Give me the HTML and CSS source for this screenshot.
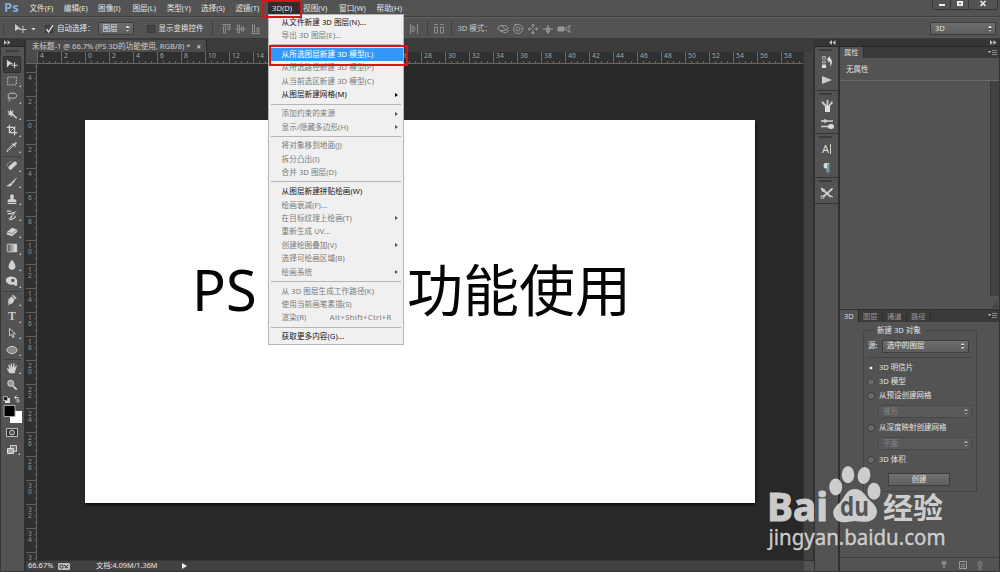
FILE: index.html
```
<!DOCTYPE html>
<html lang="zh-CN">
<head>
<meta charset="utf-8">
<title>Photoshop</title>
<link rel="stylesheet" href="styles.css">
</head>
<body>
<div class="app">
  <header class="menubar">
    <span class="logo">Ps</span>
    <nav class="menus">
      <span class="m">文件(F)</span><span class="m">编辑(E)</span><span class="m">图像(I)</span><span class="m">图层(L)</span><span class="m">类型(Y)</span><span class="m">选择(S)</span><span class="m">滤镜(T)</span>
      <div class="m open">3D(D)
        <div class="dropdown">
          <div class="item on">从文件新建 3D 图层(N)...</div>
          <div class="item">导出 3D 图层(E)...</div>
          <div class="sep"></div>
          <div class="item hot">从所选图层新建 3D 模型(L)</div>
          <div class="item">从所选路径新建 3D 模型(P)</div>
          <div class="item">从当前选区新建 3D 模型(C)</div>
          <div class="item on sub">从图层新建网格(M)</div>
          <div class="sep"></div>
          <div class="item sub">添加约束的来源</div>
          <div class="item sub">显示/隐藏多边形(H)</div>
          <div class="sep"></div>
          <div class="item">将对象移到地面(J)</div>
          <div class="item">拆分凸出(I)</div>
          <div class="item">合并 3D 图层(D)</div>
          <div class="sep"></div>
          <div class="item on">从图层新建拼贴绘画(W)</div>
          <div class="item">绘画衰减(F)...</div>
          <div class="item sub">在目标纹理上绘画(T)</div>
          <div class="item">重新生成 UV...</div>
          <div class="item sub">创建绘图叠加(V)</div>
          <div class="item">选择可绘画区域(B)</div>
          <div class="item sub">绘画系统</div>
          <div class="sep"></div>
          <div class="item">从 3D 图层生成工作路径(K)</div>
          <div class="item">使用当前画笔素描(S)</div>
          <div class="item">渲染(R)<span class="key">Alt+Shift+Ctrl+R</span></div>
          <div class="sep"></div>
          <div class="item on">获取更多内容(G)...</div>
        </div>
        <i class="mark mark-title"></i>
        <i class="mark mark-item"></i>
      </div>
      <span class="m">视图(V)</span><span class="m">窗口(W)</span><span class="m">帮助(H)</span>
    </nav>
    <div class="winbtns">
      <span><svg width="8" height="8"><path d="M1 4h6v2H1z" fill="#eee"/></svg></span>
      <span><svg width="8" height="8"><path d="M1 1h6v5H1z" fill="#eee"/><path d="M3 3h2v1H3z" fill="#333"/></svg></span>
      <span><svg width="8" height="8"><path d="M1.500 1l5 5m0-5l-5 5" stroke="#eee" stroke-width="1.600"/></svg></span>
    </div>
  </header>

  <div class="options">
    <i class="grip"></i>
    <svg class="o-move" width="22" height="12"><path d="M1 1l6 5-3 .2L1 8z" fill="#ccc"/><path d="M9 3v7M5.500 6.500h7" stroke="#ccc"/><path d="M17.500 5h4l-2 2.500z" fill="#ddd"/></svg>
    <span class="check"><svg width="9" height="9"><path d="M1.500 4l2 3L8 0" fill="none" stroke="#e8e8e8" stroke-width="1.300"/></svg></span>
    <span class="o-text">自动选择：</span>
    <span class="select o-layer">图层<i class="spin"></i></span>
    <span class="check off"></span>
    <span class="o-text">显示变换控件</span>
    <i class="vline"></i>
    <svg class="align" width="42" height="12" fill="none" stroke="#8c8c8c"><path d="M1 1.500h9M2.500 3v7h2V3zM7 3v4h2V3zM14.500 6h10M16.500 2v8h2V2zM20.500 4v4h2V4zM30 10.500h9M31.500 2v7h2V2zM36 5v4h2V5z"/></svg>
    <div class="o-right">
      <svg width="10" height="12" fill="none" stroke="#8c8c8c"><path d="M1.500 1v10M8.500 1v10M3 3.500h2v5H3zM6 5v2"/></svg>
      <i class="vline v1"></i>
      <svg width="12" height="12" fill="none" stroke="#8c8c8c"><path d="M1 1.500h4M7 1.500h4M1.500 4h3v6h-3zM7.500 4h3v6h-3z"/></svg>
      <i class="vline v2"></i>
      <span class="o-text dim">3D 模式：</span>
      <svg class="modes" width="76" height="12" fill="none" stroke="#989898"><ellipse cx="6" cy="5" rx="5" ry="2.500"/><path d="M3 8l6 2 3-3M5 3l4 4"/><circle cx="21" cy="6" r="4.500"/><circle cx="21" cy="6" r="2"/><path d="M17 2l3-1"/><path d="M36 1v10M31 6h10" stroke-dasharray="4 2"/><path d="M34.500 3l1.500-2 1.500 2M34.500 9l1.500 2 1.500-2M33 4.500L31 6l2 1.500M39 4.500L41 6l-2 1.500M51 2v9M46 6h10M49 8h4l-2 2z"/><circle cx="51" cy="6" r="1.500"/><path d="M61 4h6v4h-6z" fill="#989898"/><path d="M68 6l4-3v6zM73 2v2M73 8v2"/></svg>
    </div>
    <span class="select o-space">3D<i class="spin"></i></span>
  </div>

  <main class="work">
    <aside class="tools">
      <div class="dockhead left"><svg width="7" height="5"><path d="M0 0l3 2.500L0 5zM3.500 0l3 2.500-3 2.500z" fill="#bbb"/></svg></div>
      <div class="toolbody">
        <i class="handle"></i>
        <div class="tg">
          <span class="tool active"><svg viewBox="0 0 14 14"><path d="M1 2l7.500 5-4 .5L1 11z"/><path class="s" stroke-width="1.300" d="M10 5v7M6.500 8.500h7"/></svg></span>
          <span class="tool"><svg viewBox="0 0 14 14"><path class="s" stroke-dasharray="2 1.200" d="M2 2.500h10v9H2z"/></svg></span>
          <span class="tool"><svg viewBox="0 0 14 14"><ellipse class="s" cx="7.500" cy="5.500" rx="5" ry="3"/><path class="s" d="M4 7.500c-2 0-2 2-.5 2s1 2-.5 3"/></svg></span>
          <span class="tool"><svg viewBox="0 0 14 14"><path d="M5 1l1 3 3-1-1.500 3L10 8 7 8l-1 3-1-3-3 .5L3.500 6 1.500 3.500l3 .5z"/><path class="s" stroke-width="1.800" d="M7 7l5.500 5"/></svg></span>
          <span class="tool"><svg viewBox="0 0 14 14"><path class="s" stroke-width="1.500" d="M4 1v9h9M1 4h9v9"/><path class="s" d="M5 9l6-6"/></svg></span>
          <span class="tool"><svg viewBox="0 0 14 14"><path d="M8 2.500l1 1L11 1.500q2-.5 1.500 1.500l-2 2 1 1-1 1-4-3.500z"/><path class="s" d="M8.500 5.500L3 11l-2 1.500L2 10l5.500-5.500"/></svg></span>
        </div>
        <div class="tg">
          <span class="tool"><svg viewBox="0 0 14 14"><path class="s" stroke-width="4.500" stroke-linecap="round" d="M5 9l5.500-5"/><path class="s" stroke-dasharray="1 1" d="M6 2Q1 2 1.500 8"/></svg></span>
          <span class="tool"><svg viewBox="0 0 14 14"><path d="M13.500 1L8 9 6 7.500zM5.500 8L7.500 9.500Q5 13.500 0 11.500 3 11 5.500 8z"/></svg></span>
          <span class="tool"><svg viewBox="0 0 14 14"><path d="M5.500 7q-2-5 1.500-5.500Q10.500 2 8.500 7L12 8v2.500H2V8zM2 11.500h10v1.300H2z"/></svg></span>
          <span class="tool"><svg viewBox="0 0 14 14"><path d="M13 1L8 8 6.500 7zM6.500 7.500L8 9q-2 3-6 2 3-.5 4.500-3.500z"/><path class="s" stroke-width="1.400" d="M1 2.500h5M2 5.500h4q3-3 4-.5M11 8q0 4-7 4.500"/></svg></span>
          <span class="tool"><svg viewBox="0 0 14 14"><path d="M7 2l6 2v3l-6 5-6-2V7z"/><path d="M1 7l6 2 6-5" stroke="#777" fill="none"/></svg></span>
          <span class="tool"><svg viewBox="0 0 14 14"><defs><linearGradient id="g"><stop stop-color="#555"/><stop offset="1" stop-color="#eee"/></linearGradient></defs><path d="M1.500 2.500h11v9h-11z" fill="url(#g)" stroke="#ccc"/></svg></span>
          <span class="tool"><svg viewBox="0 0 14 14"><path d="M7 1q4 5 4 7.500a4 4 0 01-8 0Q3 6 7 1z"/></svg></span>
          <span class="tool"><svg viewBox="0 0 14 14"><path fill-rule="evenodd" d="M0 5q2-4 8-3 5 1 5 5v5q-2 2-3.500-1-6 1-8.500-2-2-2-1-4zm6 1.500a2 2 0 104 0 2 2 0 10-4 0z"/></svg></span>
        </div>
        <div class="tg">
          <span class="tool"><svg viewBox="0 0 14 14"><path d="M8.500 1l4 4-1.500 1-4-4zM6.500 3l3.500 3.500-2 4L2 13l3.500-5L2 12 3 6z"/></svg></span>
          <span class="tool letter">T</span>
          <span class="tool"><svg viewBox="0 0 14 14"><path class="s" d="M4 1.500v9l2.500-2 1.500 4 1.500-.8-1.500-3.700h3z"/></svg></span>
          <span class="tool"><svg viewBox="0 0 14 14"><ellipse cx="7" cy="7" rx="5.800" ry="4.200" fill="#888" stroke="#ddd"/></svg></span>
        </div>
        <div class="tg last">
          <span class="tool"><svg viewBox="0 0 14 14"><path d="M4 13L1 8q0-1.500 3 .5L2.500 3.500q1-1 1.500.3L5.500 7 5.200 2q.8-1 1.500 0L7.500 7l1-5q1-1 1.500 0L9.800 7l1.700-3q1.500-.5 1 1L11 10l-1 3z"/></svg></span>
          <span class="tool nt"><svg viewBox="0 0 14 14"><circle cx="5.500" cy="5" r="3.500" fill="#999" stroke="#ddd"/><path class="s" stroke-width="2" d="M8 8l4.500 4.500"/></svg></span>
        </div>
        <svg class="swap" width="20" height="8"><path d="M4 3h5v5H4z" fill="#ddd"/><path d="M2.500 1.500h4v4h-4z" fill="#222" stroke="#aaa"/><path d="M14 2.500h3v4M15.500 .5l-2 2 2 2M15.500 5.500l1.500 2 1.500-2" fill="none" stroke="#ccc"/></svg>
        <svg class="colors" width="20" height="20"><path d="M7 6h12v12H7z" fill="#fff"/><path d="M1 .5h11v11H1z" fill="#000" stroke="#aaa"/></svg>
        <svg class="mask" width="12" height="10"><path d="M.5.5h11v8H.5z" fill="#333" stroke="#bbb"/><circle cx="6" cy="4.500" r="2.500" fill="#555" stroke="#ccc"/></svg>
        <svg class="screen" width="16" height="12"><path d="M5.500.5h6v6h-6z" fill="#777" stroke="#ccc"/><path d="M2.500 3.500h6v5h-6z" fill="#aaa" stroke="#ddd"/><path d="M15 8v2h-2z" fill="#ccc"/></svg>
      </div>
    </aside>

    <section class="doc">
      <div class="tabs"><span class="tab"><span class="tabname">未标题-1 @ 66.7% (PS 3D的功能使用, RGB/8) *</span><b>×</b></span></div>
      <div class="docmain">
        <div class="pane">
          <div class="hruler"><i class="corner"></i><div class="hticks"><span>4</span><span>2</span><span>0</span><span>2</span><span>4</span><span>6</span><span>8</span><span>10</span><span>12</span><span>14</span><span>16</span><span>18</span><span>20</span><span>22</span><span>24</span><span>26</span><span>28</span><span>30</span><span>32</span><span>34</span><span>36</span><span>38</span><span>40</span><span>42</span><span>44</span><span>46</span><span>48</span><span>50</span><span>52</span><span>54</span><span>56</span><span>58</span></div></div>
          <div class="stage">
            <div class="vruler"><span>4</span><span>2</span><span>0</span><span>2</span><span>4</span><span>6</span><span>8</span><span>1<br>0</span><span>1<br>2</span><span>1<br>4</span><span>1<br>6</span><span>1<br>8</span><span>2<br>0</span><span>2<br>2</span><span>2<br>4</span><span>2<br>6</span><span>2<br>8</span><span>3<br>0</span><span>3<br>2</span><span>3<br>4</span><span>3</span></div>
            <div class="canvas"><div class="page"><span class="lead">PS 3D</span><span>功能使用</span></div></div>
          </div>
        </div>
        <div class="vscroll"></div>
      </div>
      <div class="status"><span class="zoom">66.67%</span><svg width="12" height="7"><rect width="12" height="7" rx="1" fill="#bbb"/><circle cx="3.500" cy="3.500" r="1.700" fill="none" stroke="#333"/><path d="M6 2l4 3M7 5l3-3" stroke="#333"/></svg><span class="size">文档:4.09M/1.36M</span><svg width="6" height="8"><path d="M0 1l5 3-5 3z" fill="#eee"/></svg><i class="scrollend"></i></div>
    </section>

    <aside class="dock">
      <div class="dockhead right"><svg width="7" height="5"><path d="M3 0L0 2.500 3 5zM6.500 0l-3 2.500 3 2.500z" fill="#bbb"/></svg></div>
      <div class="dg tall"><i class="handle"></i>
        <svg width="14" height="14"><path d="M2.500 1.500h3v2.500h-3zM2.500 6h3v2h-3z" fill="none" stroke="#aaa"/><path d="M2 9.500h4V13H2z" fill="#ddd"/><path d="M7 4l3-3v2q4 3 0 9 1-5-1-6v2z" fill="#ddd"/></svg>
        <svg width="14" height="14"><path d="M2 3l10 4-10 4z" fill="#ccc"/></svg></div>
      <div class="dg tall"><i class="handle"></i>
        <svg width="14" height="14"><path d="M5 7h5v6H5z" fill="#ddd"/><path d="M6 7L2.500 3.500M7.500 7V1M9 7l3-3.500" stroke="#ccc" stroke-width="1.800"/><path d="M1.500 4l1-2 2 2zM10.500 3l2-1v3z" fill="#ccc"/></svg>
        <svg width="14" height="14"><path d="M1 4h12M1 9.500h12" stroke="#ccc" stroke-width="1.500"/><path d="M2 4l3-2 3 2-3 2z" fill="#ccc"/><ellipse cx="11" cy="9.500" rx="3" ry="2.500" fill="#ddd"/></svg></div>
      <div class="dg tall"><i class="handle"></i>
        <span class="glyph">A<i class="bar"></i></span>
        <span class="glyph">¶</span></div>
      <div class="dg"><i class="handle"></i>
        <svg width="14" height="14"><path d="M2 3l9 8M12 3L3 11" stroke="#ccc" stroke-width="1.800"/><circle cx="2.500" cy="11" r="1.500" fill="none" stroke="#ccc"/><path d="M1 2l4 2-2 2zM11 10l2 1M11 3l2-.5" stroke="#ccc" fill="#ccc"/></svg></div>
    </aside>

    <aside class="panels">
      <div class="dockhead right"><svg width="7" height="5"><path d="M0 0l3 2.500L0 5zM3.500 0l3 2.500-3 2.500z" fill="#bbb"/></svg></div>
      <div class="ptabs"><span class="pt cur">属性</span><svg class="pm" width="9" height="7"><path d="M0 2h3L1.500 4z" fill="#ccc"/><path d="M4 1.500h5M4 3.500h5M4 5.500h5" stroke="#888"/></svg></div>
      <div class="noprop">无属性</div>
      <div class="propbody"><div class="propscroll"></div><svg width="9" height="8"><path d="M8 1v7H1z" fill="#444"/></svg></div>
      <div class="ptabs low"><span class="pt cur">3D</span><span class="pt">图层</span><span class="pt">通道</span><span class="pt">路径</span><svg class="pm" width="9" height="7"><path d="M0 2h3L1.500 4z" fill="#ccc"/><path d="M4 1.500h5M4 3.500h5M4 5.500h5" stroke="#888"/></svg></div>
      <div class="p3d">
        <fieldset class="box">
          <legend>新建 3D 对象</legend>
          <div class="src"><span>源:</span><span class="select">选中的图层<i class="spin"></i></span></div>
          <div class="rad"><i class="dot sel"></i>3D 明信片</div>
          <div class="rad"><i class="dot"></i>3D 模型</div>
          <div class="rad"><i class="dot"></i>从预设创建网格</div>
          <span class="select dis">锥形<i class="spin"></i></span>
          <div class="rad"><i class="dot"></i>从深度映射创建网格</div>
          <span class="select dis">平面<i class="spin"></i></span>
          <div class="rad"><i class="dot"></i>3D 体积</div>
          <span class="create">创建</span>
        </fieldset>
      </div>
      <div class="pfoot">
        <svg width="10" height="10"><circle cx="4" cy="3" r="2.500" fill="#888"/><path d="M3 6h2v2H3z" fill="#888"/></svg>
        <svg width="10" height="10"><path d="M1.500 1.500h7v7h-7z" fill="none" stroke="#999"/><circle cx="5" cy="5.500" r="1.500" fill="none" stroke="#999"/></svg>
        <svg width="8" height="10"><path d="M1 3h6M3 1.500h2M1.500 5h5M2 7h4M2 9h4" stroke="#888"/></svg>
      </div>
    </aside>
  </main>
  <svg class="watermark" width="190" height="90" viewBox="0 0 190 90">
    <g class="wm">
      <text class="wbai" x="5" y="57.500" textLength="61" lengthAdjust="spacingAndGlyphs">Bai</text>
      <ellipse cx="73.700" cy="24" rx="6.500" ry="8.500"/><ellipse cx="86" cy="11.700" rx="6.300" ry="8.500"/><ellipse cx="102" cy="12.500" rx="6.300" ry="8.500" transform="rotate(10 102 12.500)"/><ellipse cx="112" cy="28.300" rx="6.500" ry="8.500"/>
      <path d="M92.500 26c9 0 11 8 16 12 6 5 9 11 4 17-4 5-12 4-20 3-8 1-15 3-19-2-5-7-1-12 4-16 5-5 7-14 15-14z"/>
      <text class="wdu" x="78" y="53" textLength="29" lengthAdjust="spacingAndGlyphs">du</text>
      <text class="wjy" x="121" y="55.500" textLength="60" lengthAdjust="spacingAndGlyphs">经验</text>
      <text class="wurl" x="6.500" y="82" textLength="177" lengthAdjust="spacingAndGlyphs">jingyan.baidu.com</text>
    </g>
  </svg>
</div>
</body>
</html>
```
FILE: styles.css
```
* { box-sizing: border-box; }
body { margin: 0; }
svg { display: block; flex: none; }
.app {
  position: relative; display: flex; flex-direction: column;
  width: 1000px; height: 572px; overflow: hidden;
  background: #535353; color: #e4e4e4;
  font: 7.600px/1 "Noto Sans", "Noto Sans CJK SC", sans-serif;
  white-space: nowrap;
}

/* Menu bar */
.menubar { display: flex; height: 17px; flex: none; border-bottom: 1px solid #404040; }
.logo { width: 25px; padding-left: 4px; font: bold 13px/15px "Open Sans", sans-serif; color: #7fafdc; }
.menus { display: flex; height: 16px; align-items: center; }
.m { width: 34.300px; padding-left: 4.500px; line-height: 14px; }
.m:nth-child(n+9) { width: 37.500px; }
.m:nth-child(9) { width: 36px; }
.open { position: relative; width: 32px; height: 13px; margin: 0 -1px 0 2.500px; line-height: 13px; background: #2e2e2e; }
.winbtns { display: flex; margin-left: auto; height: 10px; margin-right: 2px; border: 1px solid #363636; border-top: 0; border-radius: 0 0 2px 2px; }
.winbtns span { width: 18px; display: flex; justify-content: center; border-right: 1px solid #363636; }
.winbtns span:last-child { width: 28px; border: 0; }

/* Open 3D menu */
.dropdown {
  position: absolute; z-index: 5; left: 0; top: 12px; width: 136px; height: 331px; padding-top: 1px;
  background: #f0f0f0; border: 1px solid #b5b5b5;
}
.item { display: flex; align-items: center; height: 13.450px; padding-left: 13px; color: #7a7a7a; line-height: 13px; letter-spacing: .06px; }
.item.on { color: #111; }
.item.hot { background: #3399f8; color: #fff; margin: 0 0 0 2px; padding-left: 11px; }
.item.sub::after { content: ""; margin-left: auto; margin-right: 5px; border: 2px solid transparent; border-left: 3px solid #555; border-right: 0; }
.item.on.sub::after { border-left-color: #000; }
.sep { height: 5.400px; margin: 0 2px; background: linear-gradient(#b5b5b5, #b5b5b5) 0 2px / 100% 1px no-repeat; }
.key { margin-left: auto; margin-right: 11px; letter-spacing: .35px; }
.mark { position: absolute; z-index: 6; border: 2px solid #d5171c; }
.mark-title { left: -6px; top: -2px; width: 40px; height: 18px; }
.mark-item { left: 1px; top: 43px; width: 139px; height: 21px; }

/* Options bar */
.options { display: flex; align-items: center; height: 22px; flex: none; border-top: 1px solid #606060; border-bottom: 1px solid #3a3a3a; padding: 1px 4px 0 0; }
.grip { width: 2px; height: 14px; margin: 0 9px 0 3px; border-left: 1px solid #464646; }
.o-move { margin-right: 9px; }
.check { width: 8px; height: 8px; margin-right: 4px; background: #454545; border: 1px solid #383838; }
.check svg { margin: -1px; }
.check.off { margin: 0 4px 0 13px; }
.o-text { font-size: 7.500px; }
.o-text.dim { color: #c4c4c4; width: 39px; }
.select { display: flex; align-items: center; justify-content: space-between; height: 13px; padding: 0 3px 0 4px; background: linear-gradient(#6e6e6e, #5c5c5c); border: 1px solid #3d3d3d; border-radius: 1px; }
.spin { width: 4px; height: 6px; background: linear-gradient(#535353, #535353) 0 50% / 100% 2px no-repeat, #ddd; clip-path: polygon(50% 0, 100% 35%, 100% 65%, 50% 100%, 0 65%, 0 35%); }
.o-layer { width: 36px; margin-left: 3px; }
.vline { width: 1px; height: 15px; background: #3f3f3f; margin: 0 8px; }
.v1 { margin-right: 5px; }
.v2 { margin: 0 6px; }
.o-right { display: flex; align-items: center; margin-left: 146px; }
.o-space { width: 66px; margin-left: auto; }

/* Shared dock parts */
.work { display: flex; flex: 1; min-height: 0; border-bottom: 1px solid #363636; }
.dockhead { height: 8px; flex: none; display: flex; align-items: center; background: #353535; border-bottom: 1px solid #292929; }
.dockhead.left { padding-left: 3px; }
.dockhead.right { justify-content: flex-end; padding-right: 2px; }
.handle { display: block; width: 13px; height: 2px; background: #3c3c3c; }

/* Tool column */
.tools { width: 26px; border-right: 2px solid #303030; border-left: 1px solid #353535; }
.toolbody { display: flex; flex-direction: column; align-items: flex-start; }
.toolbody .handle { margin: 3px 0 4px 5px; }
.tg { padding-bottom: 1px; border-bottom: 1px solid #3e3e3e; margin: 0 2px; }
.tg.last { border: 0; }
.tool { display: flex; align-items: center; justify-content: center; position: relative; width: 18px; height: 16.550px; }
.tool svg { width: 12px; height: 12px; fill: #d2d2d2; }
.tool .s { fill: none; stroke: #d2d2d2; }
.tool::after { content: ""; position: absolute; right: 0; bottom: 2px; border: 1px solid transparent; border-right-color: #ccc; border-bottom-color: #ccc; }
.tool.active { background: #3a3a3a; border: 1px solid #2f2f2f; border-radius: 1px; }
.tool.active::after, .tool.nt::after { display: none; }
.tool.letter { font: bold 12px/16px "Liberation Serif", serif; color: #ccc; }
.swap { margin: 1px 0 2px 0; }
.colors { margin-left: 2px; }
.mask { margin: 3px 0 7px 5px; }
.screen { margin-left: 4px; }

/* Document */
.doc { display: flex; flex-direction: column; width: 788px; }
.tabs { height: 13px; flex: none; background: #3b3b3b; }
.tab { display: flex; align-items: center; justify-content: space-between; width: 181px; height: 12px; margin-top: 1px; padding: 2px 5px 0 6px; background: #4c4c4c; border-right: 1px solid #2b2b2b; color: #ccc; font-size: 7.550px; }
.tab b { font-size: 8px; }
.docmain { display: flex; flex: 1; min-height: 0; }
.pane { width: 777px; display: flex; flex-direction: column; }
.hruler { display: flex; height: 12px; flex: none; background: #303030; border-bottom: 1px solid #666; color: #a5a5a5; font-size: 6.800px; }
.corner { width: 11px; background: #4a4a4a; }
.hticks { display: flex; flex: 1; overflow: hidden; background: repeating-linear-gradient(90deg, #666 0 1px, transparent 1px 6px) 0 100% / 100% 2px no-repeat; }
.hticks span { flex: none; width: 24px; padding: 1px 0 0 2px; border-left: 1px solid #686868; }
.stage { display: flex; flex: 1; min-height: 0; }
.vruler { width: 11px; flex: none; padding-top: 8px; overflow: hidden; background: repeating-linear-gradient(transparent 0 2px, #555 2px 3px, transparent 3px 6px) 100% 0 / 2px 100% no-repeat #303030; border-right: 1px solid #666; color: #999; font-size: 6.500px; line-height: 6px; }
.vruler span { display: block; height: 24px; padding: 2px 0 0 2px; border-top: 1px solid #606060; }
.vruler span:last-child { height: 9px; }
.canvas { flex: 1; padding: 56px 0 0 48px; background: #282828; }
.page { display: flex; width: 670px; height: 383px; padding: 134px 0 0 107px; background: #fff; box-shadow: 1px 2px 2px #111; color: #050505; font-size: 56px; line-height: 70px; }
.lead { width: 215px; }
.vscroll { width: 11px; background: #414141; border-left: 1px solid #333; border-right: 1px solid #333; }
.status { display: flex; align-items: center; height: 11px; flex: none; background: #414141; padding-left: 2px; border-top: 1px solid #333; }
.zoom { width: 30px; font-size: 7.500px; }
.size { margin-left: 26px; width: 86px; font-size: 7.300px; }
.scrollend { width: 10px; height: 10px; margin-left: auto; background: #535353; }

/* Icon dock */
.dock { width: 26px; border-left: 1px solid #303030; border-right: 2px solid #303030; }
.dg { display: flex; flex-direction: column; align-items: center; height: 26px; border-bottom: 1px solid #343434; padding-top: 2px; }
.dg svg, .dg .glyph { margin-top: 4px; }
.dg.tall { height: 43.700px; }
.dg .handle { margin-right: 2px; }
.glyph { display: flex; align-items: center; height: 14px; font: 11px/14px "Noto Sans", sans-serif; color: #ddd; }
.bar { width: 1px; height: 10px; margin-left: 1px; background: #ccc; }

/* Panels */
.panels { display: flex; flex-direction: column; flex: 1; border-right: 1px solid #333; }
.ptabs { display: flex; height: 11px; flex: none; background: #3a3a3a; }
.pt { display: flex; align-items: center; padding: 1px 4px 0; border-right: 1px solid #2d2d2d; color: #999; font-size: 7.300px; }
.pt.cur { background: #535353; color: #ddd; }
.pm { margin: 2px 2px 0 auto; }
.noprop { height: 23px; flex: none; padding: 8px 6px 0; font-size: 7.500px; border-bottom: 1px solid #6a6a6a; }
.propbody { height: 229px; flex: none; display: flex; flex-direction: column; align-items: flex-end; border-bottom: 1px solid #303030; }
.propscroll { width: 9px; height: 215px; margin-bottom: 4px; background: #424242; border-left: 1px solid #363636; }
.low { height: 12px; }
.low .pt { width: 24px; }
.low .pt.cur { width: 19px; }
.p3d { flex: 1; padding: 4px 0 0 23px; }
.box { display: flex; flex-direction: column; width: 114px; height: 166px; margin: 0; padding: 0 3px; border: 1px solid #444; }
.box legend { margin-left: 6px; padding: 0 4px; line-height: 9px; font-size: 7.500px; }
.src { display: flex; align-items: center; gap: 4px; height: 23px; flex: none; padding: 5px 1px 5px; border-bottom: 1px solid #444; margin-bottom: 3px; }
.src .select { width: 87px; height: 13px; }
.rad { display: flex; align-items: center; height: 14px; flex: none; gap: 4px; font-size: 7.500px; }
.dot { display: flex; width: 8px; height: 8px; border-radius: 50%; background: #6a6a6a; border: 1px solid #3e3e3e; }
.dot.sel::after { content: ""; width: 2px; height: 2px; margin: auto; background: #fff; }
.select.dis { width: 94px; height: 13px; margin: 2px 0 3px 11px; color: #888; background: #595959; border-color: #484848; flex: none; }
.dis .spin { opacity: .6; }
.create { width: 62px; height: 13px; flex: none; margin: 6px 0 0 21px; line-height: 11px; text-align: center; background: linear-gradient(#707070, #606060); border: 1px solid #3d3d3d; }
.pfoot { display: flex; height: 14px; flex: none; justify-content: flex-end; gap: 8px; padding: 2px 15px 0 0; border-top: 1px solid #3f3f3f; }

/* Watermark */
.watermark { position: absolute; left: 762px; top: 463px; z-index: 10; }
.wm { fill: #d7d7d7; opacity: .93; }
.wbai { font: bold 40px "Open Sans", sans-serif; stroke: #d7d7d7; stroke-width: 1.200px; }
.wdu { font: bold 27px "Open Sans", sans-serif; fill: #555; }
.wjy { font: bold 29px "Noto Sans CJK SC", sans-serif; }
.wurl { font: 22px "Noto Sans", sans-serif; stroke: #d7d7d7; stroke-width: .4px; }
```
